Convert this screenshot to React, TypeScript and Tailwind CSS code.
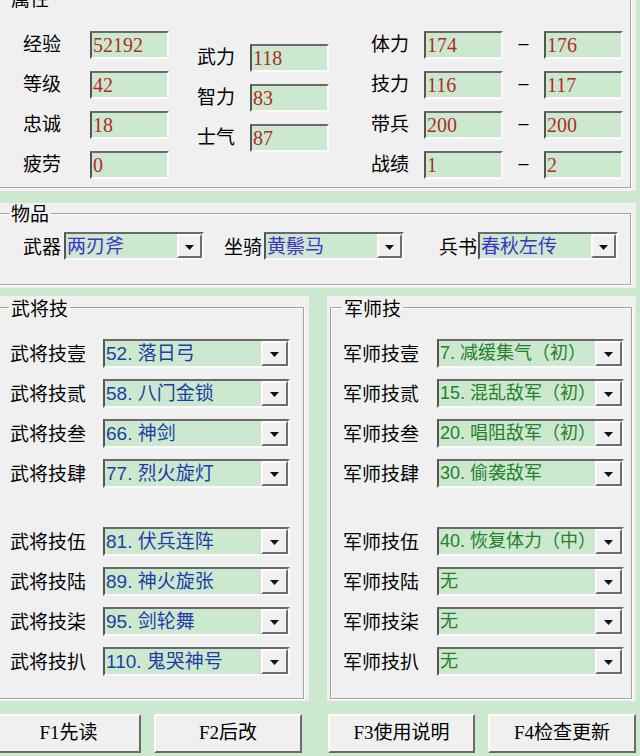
import React from "react";

const cjk = "font-['Noto_Sans_CJK_SC',sans-serif]";

type Field = { label: string; value: string };

const baseCol: Field[] = [
  { label: "经验", value: "52192" },
  { label: "等级", value: "42" },
  { label: "忠诚", value: "18" },
  { label: "疲劳", value: "0" },
];

const powerCol: Field[] = [
  { label: "武力", value: "118" },
  { label: "智力", value: "83" },
  { label: "士气", value: "87" },
];

const rangeCol = [
  { label: "体力", min: "174", max: "176" },
  { label: "技力", min: "116", max: "117" },
  { label: "带兵", min: "200", max: "200" },
  { label: "战绩", min: "1", max: "2" },
];

const generalSkills = [
  ["武将技壹", "52. 落日弓"],
  ["武将技贰", "58. 八门金锁"],
  ["武将技叁", "66. 神剑"],
  ["武将技肆", "77. 烈火旋灯"],
  ["武将技伍", "81. 伏兵连阵"],
  ["武将技陆", "89. 神火旋张"],
  ["武将技柒", "95. 剑轮舞"],
  ["武将技扒", "110. 鬼哭神号"],
];

const tacticSkills = [
  ["军师技壹", "7. 减缓集气（初）"],
  ["军师技贰", "15. 混乱敌军（初）"],
  ["军师技叁", "20. 唱阻敌军（初）"],
  ["军师技肆", "30. 偷袭敌军"],
  ["军师技伍", "40. 恢复体力（中）"],
  ["军师技陆", "无"],
  ["军师技柒", "无"],
  ["军师技扒", "无"],
];

// sunken edit box, values drawn in red
function NumBox({ value }: { value: string }) {
  return (
    <div className="w-[79px] h-[28px] flex items-center pl-[1px] bg-[#cce8cf] border-2 border-t-[#6a6a6a] border-l-[#555] border-r-[#fbfbfb] border-b-[#fbfbfb] font-['Liberation_Serif',serif] text-[20px] text-[#b32a2a] leading-none">
      {value}
    </div>
  );
}

function DropArrow({ w }: { w: string }) {
  return (
    <div
      className={`${w} h-full flex items-center justify-center bg-[#f0f0f0] border-2 border-t-[#fdfdfd] border-l-[#fdfdfd] border-b-[#6d6d6d] border-r-[#6d6d6d]`}
    >
      <svg width="9" height="5" viewBox="0 0 9 5" className="mt-[2px]">
        <polygon points="0,0 9,0 4.5,5" fill="#111" />
      </svg>
    </div>
  );
}

function Combo({
  text,
  width,
  height,
  color,
  size,
  arrow,
}: {
  text: string;
  width: string;
  height: string;
  color: string;
  size: string;
  arrow: string;
}) {
  return (
    <div
      className={`${width} ${height} flex bg-[#cce8cf] border-2 border-t-[#6a6a6a] border-l-[#555] border-r-[#fbfbfb] border-b-[#fbfbfb]`}
    >
      <div
        className={`flex-1 flex items-center pl-[1px] whitespace-nowrap overflow-hidden font-['Liberation_Sans','Noto_Sans_CJK_SC',sans-serif] ${size} ${color} leading-none`}
      >
        {text}
      </div>
      <DropArrow w={arrow} />
    </div>
  );
}

function Legend({ children, ml }: { children: React.ReactNode; ml: string }) {
  return (
    <legend className={`${ml} px-[2px] text-[19px] leading-[20px] text-black ${cjk}`}>
      {children}
    </legend>
  );
}

const groupLine =
  "border border-[#a3a3a3] shadow-[inset_1px_1px_0_#fff,1px_1px_0_#fff]";

function SkillPanel({
  title,
  rows,
  color,
  size,
  boxPad,
  labelPad,
  labelW,
  width,
  legendMl,
}: {
  title: string;
  rows: string[][];
  color: string;
  size: string;
  boxPad: string;
  labelPad: string;
  labelW: string;
  width: string;
  legendMl: string;
}) {
  return (
    <div className={`${width} bg-[#f0f0f0] ${boxPad} pt-[2px] pb-[2px]`}>
      <fieldset className={`${groupLine} pt-[21px] pb-[22px]`}>
        <Legend ml={legendMl}>{title}</Legend>
        <div className="flex flex-col gap-[11px]">
          {rows.map(([label, text], i) => (
            <div key={label} className={`flex items-center ${i === 4 ? "mt-[28px]" : ""}`}>
              <div className={`${labelW} ${labelPad} text-[19px] text-black ${cjk}`}>{label}</div>
              <Combo
                text={text}
                width="w-[187px]"
                height="h-[29px]"
                color={color}
                size={size}
                arrow="w-[27px]"
              />
            </div>
          ))}
        </div>
      </fieldset>
    </div>
  );
}

function FnButton({ label, width }: { label: string; width: string }) {
  return (
    <button
      className={`${width} h-[39px] flex items-center justify-center bg-[#f0f0f0] border-2 border-t-[#fdfdfd] border-l-[#fdfdfd] border-b-[#6b6b6b] border-r-[#6b6b6b] text-[19px] text-black font-['Liberation_Serif','Noto_Sans_CJK_SC',serif]`}
    >
      {label}
    </button>
  );
}

export default function App() {
  return (
    <div className="w-[640px] h-[756px] overflow-hidden bg-[#cce8cf]">
      <div className="w-[640px] ml-[-4px] mt-[-15px] flex flex-col">
        {/* 属性 */}
        <div className="bg-[#f0f0f0] pl-[2px] pr-[5px] pt-[3px] pb-[3px]">
          <fieldset className={`${groupLine} pt-[23px] pb-[8px]`}>
            <Legend ml="ml-[10px]">属性</Legend>
            <div className="flex pl-[24px]">
              <div className="flex flex-col gap-[12px]">
                {baseCol.map((f) => (
                  <div key={f.label} className="flex items-center">
                    <div className={`w-[67px] text-[19px] text-black ${cjk} -mt-[3px]`}>{f.label}</div>
                    <NumBox value={f.value} />
                  </div>
                ))}
              </div>
              <div className="flex flex-col gap-[12px] ml-[28px] mt-[13px]">
                {powerCol.map((f) => (
                  <div key={f.label} className="flex items-center">
                    <div className={`w-[53px] text-[19px] text-black ${cjk} -mt-[3px]`}>{f.label}</div>
                    <NumBox value={f.value} />
                  </div>
                ))}
              </div>
              <div className="flex flex-col gap-[12px] ml-[42px]">
                {rangeCol.map((f) => (
                  <div key={f.label} className="flex items-center">
                    <div className={`w-[53px] text-[19px] text-black ${cjk} -mt-[3px]`}>{f.label}</div>
                    <NumBox value={f.min} />
                    <div className="w-[41px] text-center text-[18px] text-black font-['Liberation_Sans',sans-serif] -mt-[4px]">
                      –
                    </div>
                    <NumBox value={f.max} />
                  </div>
                ))}
              </div>
            </div>
          </fieldset>
        </div>

        {/* 物品 */}
        <div className="bg-[#f0f0f0] pl-[2px] pr-[5px] mt-[12px] pb-[3px]">
          <fieldset className={`${groupLine} pt-[9px] pb-[23px]`}>
            <Legend ml="ml-[10px]">物品</Legend>
            <div className="flex items-center pl-[24px]">
              <div className={`w-[41px] text-[19px] text-black ${cjk}`}>武器</div>
              <Combo text="两刃斧" width="w-[140px]" height="h-[28px]" color="text-[#4232c8]" size="text-[19px]" arrow="w-[25px]" />
              <div className={`w-[40px] ml-[20px] text-[19px] text-black ${cjk}`}>坐骑</div>
              <Combo text="黄鬃马" width="w-[140px]" height="h-[28px]" color="text-[#4232c8]" size="text-[19px]" arrow="w-[25px]" />
              <div className={`w-[39px] ml-[35px] text-[19px] text-black ${cjk}`}>兵书</div>
              <Combo text="春秋左传" width="w-[140px]" height="h-[28px]" color="text-[#4232c8]" size="text-[19px]" arrow="w-[25px]" />
            </div>
          </fieldset>
        </div>

        {/* 武将技 / 军师技 */}
        <div className="flex mt-[8px] gap-[18px]">
          <SkillPanel
            title="武将技"
            rows={generalSkills}
            color="text-[#1e3ea6]"
            size="text-[19px]"
            boxPad="pl-[2px] pr-[5px]"
            labelPad="pl-[11px]"
            labelW="w-[104px]"
            width="w-[313px]"
            legendMl="ml-[10px]"
          />
          <SkillPanel
            title="军师技"
            rows={tacticSkills}
            color="text-[#25802c]"
            size="text-[18px]"
            boxPad="pl-[3px] pr-[4px]"
            labelPad="pl-[12px]"
            labelW="w-[106px]"
            width="w-[309px]"
            legendMl="ml-[11px]"
          />
        </div>

        {/* 功能键 */}
        <div className="flex mt-[13px]">
          <FnButton label="F1先读" width="w-[147px]" />
          <div className="ml-[13px]">
            <FnButton label="F2后改" width="w-[148px]" />
          </div>
          <div className="ml-[26px]">
            <FnButton label="F3使用说明" width="w-[147px]" />
          </div>
          <div className="ml-[13px]">
            <FnButton label="F4检查更新" width="w-[148px]" />
          </div>
        </div>
      </div>
    </div>
  );
}
